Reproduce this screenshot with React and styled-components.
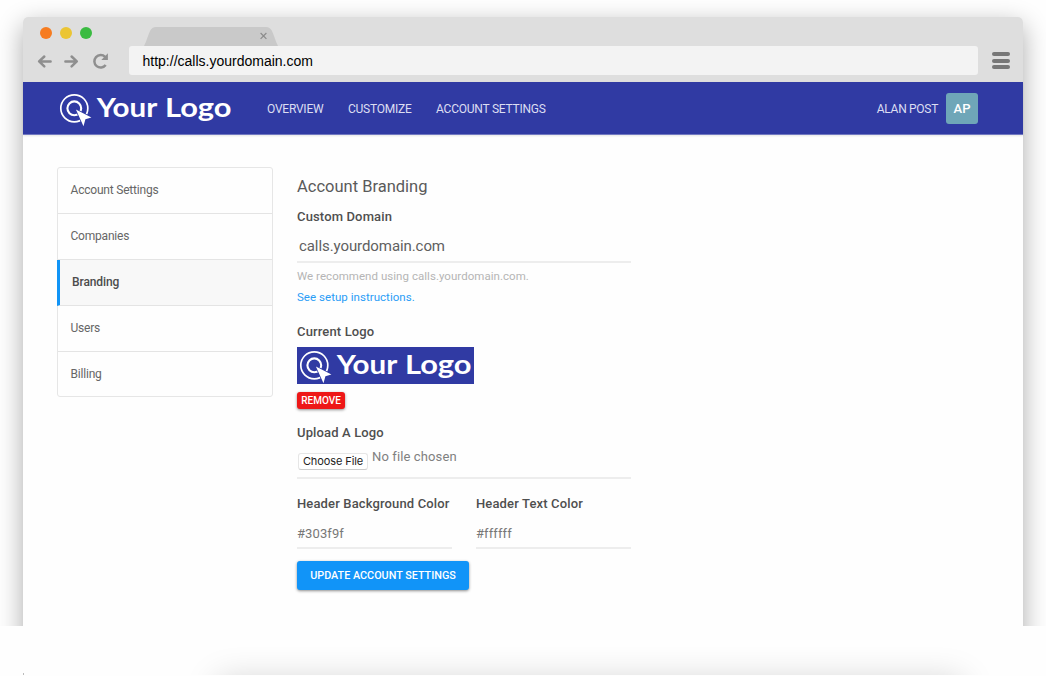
import React from "react";
import styled, { createGlobalStyle } from "styled-components";

const GlobalStyle = createGlobalStyle`
  * { box-sizing: border-box; }
  body {
    margin: 0;
    background: #fefefe;
    font-family: Roboto, "Liberation Sans", sans-serif;
    color: #555;
  }
`;

const Page = styled.div`
  width: 1046px;
  height: 676px;
  overflow: hidden;
`;

const Stage = styled.div`
  height: 626px;
  padding: 17px 23px 0;
  overflow: hidden;
`;

const BrowserWindow = styled.div`
  height: 660px;
  background: #fefefe;
  border-radius: 5px 5px 0 0;
  box-shadow: 0 8px 26px rgba(0, 0, 0, 0.33);
`;

const Chrome = styled.div`
  height: 65px;
  background: #dedede;
  border-radius: 5px 5px 0 0;
`;

const TabRow = styled.div`
  display: flex;
  align-items: flex-end;
  height: 29px;
`;

const Lights = styled.div`
  display: flex;
  gap: 8px;
  width: 121px;
  padding: 0 0 7px 17px;
`;

const Light = styled.span`
  width: 12px;
  height: 12px;
  border-radius: 50%;
  background: ${(p) => p.$color};
`;

const ToolRow = styled.div`
  display: flex;
  align-items: center;
  height: 29px;
`;

const NavIcons = styled.svg`
  width: 106px;
  height: 29px;
  flex: none;
`;

const Address = styled.div`
  width: 849px;
  height: 29px;
  padding-left: 13.5px;
  border-radius: 3px;
  background: #f3f3f3;
  color: #000;
  font: 14px/30px "Liberation Sans", Arial, sans-serif;
`;

const Burger = styled.div`
  display: flex;
  flex-direction: column;
  gap: 2.5px;
  margin-left: 14px;
`;

const Bar = styled.span`
  width: 18px;
  height: 4px;
  border-radius: 2px;
  background: #777;
`;

const Header = styled.header`
  display: flex;
  align-items: center;
  height: 53px;
  padding: 0 45px 0 34px;
  background: #303aa3;
  border-bottom: 1px solid #7178c0;
  box-shadow: 0 1px 2px rgba(0, 0, 0, 0.1);
`;

const LogoSvg = styled.svg`
  display: block;
  flex: none;
  width: 177px;
  height: 37px;
  background: #303aa3;
`;

const Nav = styled.nav`
  display: flex;
  gap: 24.5px;
  margin-left: 33px;
`;

const NavLink = styled.a`
  padding-top: 2px;
  color: #dcdef2;
  font-size: 12px;
  line-height: 20px;
  letter-spacing: ${(p) => p.$spacing || "-0.23px"};
`;

const User = styled.div`
  display: flex;
  align-items: center;
  gap: 8px;
  margin-left: auto;
`;

const Avatar = styled.div`
  width: 32px;
  height: 31px;
  border-radius: 3px;
  background: #6fa6b8;
  color: #fff;
  font-size: 13px;
  font-weight: 500;
  line-height: 32px;
  text-align: center;
`;

const Main = styled.main`
  display: flex;
  align-items: flex-start;
  padding: 32px 34px;
`;

const Menu = styled.ul`
  width: 216px;
  margin: 0;
  padding: 0;
  list-style: none;
  border: 1px solid #e6e6e6;
  border-radius: 3px;
`;

const MenuItem = styled.li`
  height: ${(p) => (p.$last ? "44px" : "46px")};
  padding-left: ${(p) => (p.$active ? "12px" : "12.5px")};
  margin-left: ${(p) => (p.$active ? "-1px" : "0")};
  border-left: ${(p) => (p.$active ? "3px solid #1194f6" : "0")};
  border-bottom: ${(p) => (p.$last ? "0" : "1px solid #e4e4e4")};
  background: ${(p) => (p.$active ? "#f8f8f8" : "transparent")};
  color: ${(p) => (p.$active ? "#4c4c4c" : "#666")};
  font-size: 12px;
  font-weight: ${(p) => (p.$active ? 500 : 400)};
  line-height: 45px;
  letter-spacing: ${(p) => (p.$active ? "-0.1px" : "-0.2px")};
`;

const Form = styled.section`
  width: 334px;
  margin-left: 24px;
  padding-top: 8px;
`;

const Title = styled.h1`
  margin: 0 0 7px;
  color: #5a5a5a;
  font-size: 16.5px;
  font-weight: 400;
  line-height: 24px;
`;

const Label = styled.div`
  margin-top: ${(p) => p.$top || 0}px;
  color: #4f4f4f;
  font-size: 13px;
  font-weight: 500;
  line-height: 21px;
  letter-spacing: 0.14px;
  white-space: nowrap;
`;

const Field = styled.div`
  height: ${(p) => p.$height}px;
  padding: ${(p) => p.$pad};
  border-bottom: 2px solid #ededed;
  color: ${(p) => p.$color};
  font-size: ${(p) => p.$size}px;
  line-height: 31px;
  letter-spacing: ${(p) => p.$spacing || "0"};
`;

const Hint = styled.div`
  padding-top: ${(p) => p.$top || 0}px;
  color: ${(p) => p.$color};
  font-size: 11.5px;
  line-height: 20px;
  letter-spacing: 0.04px;
`;

const LogoPreview = styled.div`
  margin-top: 5px;
`;

const Button = styled.button`
  display: block;
  width: ${(p) => p.$width}px;
  height: ${(p) => p.$height}px;
  margin: ${(p) => p.$top}px 0 0;
  padding: 0;
  border: 0;
  border-radius: 3px;
  background: ${(p) => p.$color};
  box-shadow: 0 1px 3px rgba(0, 0, 0, 0.45);
  color: #fff;
  font-family: inherit;
  font-size: ${(p) => p.$size}px;
  font-weight: 500;
  line-height: ${(p) => p.$height}px;
  white-space: nowrap;
`;

const FileRow = styled.div`
  display: flex;
  gap: 4px;
  height: 36px;
  border-bottom: 2px solid #ededed;
`;

const FileButton = styled.button`
  width: 70px;
  height: 17px;
  margin: 10px 0 0 1px;
  padding: 0;
  border: 1px solid #e6e6e6;
  border-bottom-color: #ccc;
  border-radius: 3px;
  background: #fff;
  color: #222;
  font-family: Inter, "Liberation Sans", sans-serif;
  font-size: 11px;
  line-height: 15px;
  letter-spacing: -0.1px;
  white-space: nowrap;
`;

const FileName = styled.span`
  padding-top: 3px;
  color: #808080;
  font-size: 13px;
  line-height: 21px;
  letter-spacing: 0.12px;
`;

const Columns = styled.div`
  display: grid;
  grid-template-columns: 155px 155px;
  gap: 24px;
  margin-top: 14px;
`;

const NextSection = styled.div`
  display: flex;
  align-items: flex-end;
  height: 49px;
  padding-left: 23px;
  overflow: hidden;
`;

const Speck = styled.div`
  width: 1px;
  height: 2px;
  background: #bbb;
`;

const NextWindow = styled.div`
  width: 744px;
  height: 60px;
  margin: 0 0 -65px 194px;
  box-shadow: 0 0 34px rgba(0, 0, 0, 0.18);
`;

function Logo() {
  return (
    <LogoSvg viewBox="0 0 177 37">
      <g fill="none" stroke="#fff">
        <circle cx="17.3" cy="18.3" r="13.5" strokeWidth="1.7" />
        <circle cx="17.3" cy="18.3" r="6.9" strokeWidth="2.1" />
      </g>
      <path
        d="M18.9 19.4 34.4 27.5 28.4 29.3 26.5 36.2Z"
        fill="#fff"
        stroke="#303aa3"
        strokeWidth="1.6"
        paintOrder="stroke"
      />
      <g fill="#fff" fontFamily="Lato, sans-serif" fontWeight="700" fontSize="26">
        <text x="39.8" y="26.7" textLength="60.5" lengthAdjust="spacingAndGlyphs">
          Your
        </text>
        <text x="108" y="26.7" textLength="66.5" lengthAdjust="spacingAndGlyphs">
          Logo
        </text>
      </g>
    </LogoSvg>
  );
}

function Tab() {
  return (
    <svg width="134" height="19" viewBox="0 0 134 19">
      <path
        d="M0 19 C3 13 4 8 6 4 Q8 0 12 0 H122 Q126 0 128 4 C130 8 131 13 134 19Z"
        fill="#c9c9c9"
      />
      <path d="M116.6 6 L122.4 11.8 M122.4 6 L116.6 11.8" stroke="#8b8b8b" strokeWidth="1.2" />
    </svg>
  );
}

function HistoryIcons() {
  return (
    <NavIcons viewBox="0 0 106 29" fill="none" stroke="#8f8f8f" strokeWidth="2.5" strokeLinecap="round" strokeLinejoin="round">
      <path d="M21.3 10.5 16.1 15.4 21.3 20.3 M16.6 15.4H27.6" />
      <path d="M48.6 10.5 53.8 15.4 48.6 20.3 M53.3 15.4H42.4" />
      <path d="M82.7 19.1 A6.3 6.3 0 1 1 82.1 10.8" strokeLinecap="butt" />
      <path d="M84.9 7.3V13.9H78.3Z" fill="#8f8f8f" stroke="none" />
    </NavIcons>
  );
}

const MENU = ["Account Settings", "Companies", "Branding", "Users", "Billing"];

export default function App() {
  return (
    <Page>
      <GlobalStyle />
      <Stage>
        <BrowserWindow>
          <Chrome>
            <TabRow>
              <Lights>
                <Light $color="#f67c20" />
                <Light $color="#ebc534" />
                <Light $color="#3abb41" />
              </Lights>
              <Tab />
            </TabRow>
            <ToolRow>
              <HistoryIcons />
              <Address>http://calls.yourdomain.com</Address>
              <Burger>
                <Bar />
                <Bar />
                <Bar />
              </Burger>
            </ToolRow>
          </Chrome>
          <Header>
            <Logo />
            <Nav>
              <NavLink>OVERVIEW</NavLink>
              <NavLink>CUSTOMIZE</NavLink>
              <NavLink>ACCOUNT SETTINGS</NavLink>
            </Nav>
            <User>
              <NavLink $spacing="-0.3px">ALAN POST</NavLink>
              <Avatar>AP</Avatar>
            </User>
          </Header>
          <Main>
            <Menu>
              {MENU.map((name, i) => (
                <MenuItem key={name} $active={name === "Branding"} $last={i === MENU.length - 1}>
                  {name}
                </MenuItem>
              ))}
            </Menu>
            <Form>
              <Title>Account Branding</Title>
              <Label>Custom Domain</Label>
              <Field $height={36} $pad="4px 0 0 2px" $size={15} $spacing="-0.08px" $color="#606060">
                calls.yourdomain.com
              </Field>
              <Hint $top={3} $color="#b5b5b5">We recommend using calls.yourdomain.com.</Hint>
              <Hint $top={1} $color="#2a9df6">See setup instructions.</Hint>
              <Label $top={14}>Current Logo</Label>
              <LogoPreview>
                <Logo />
              </LogoPreview>
              <Button $width={48} $height={17} $top={8} $size={10} $color="#ee1717">REMOVE</Button>
              <Label $top={13}>Upload A Logo</Label>
              <FileRow>
                <FileButton>Choose File</FileButton>
                <FileName>No file chosen</FileName>
              </FileRow>
              <Columns>
                <div>
                  <Label>Header Background Color</Label>
                  <Field $height={35} $pad="4px 0 0" $size={13} $spacing="0.1px" $color="#777">#303f9f</Field>
                </div>
                <div>
                  <Label>Header Text Color</Label>
                  <Field $height={35} $pad="4px 0 0" $size={13} $spacing="0.1px" $color="#777">#ffffff</Field>
                </div>
              </Columns>
              <Button $width={172} $height={29} $top={12} $size={10.8} $color="#1194f8">
                UPDATE ACCOUNT SETTINGS
              </Button>
            </Form>
          </Main>
        </BrowserWindow>
      </Stage>
      <NextSection>
        <Speck />
        <NextWindow />
      </NextSection>
    </Page>
  );
}
